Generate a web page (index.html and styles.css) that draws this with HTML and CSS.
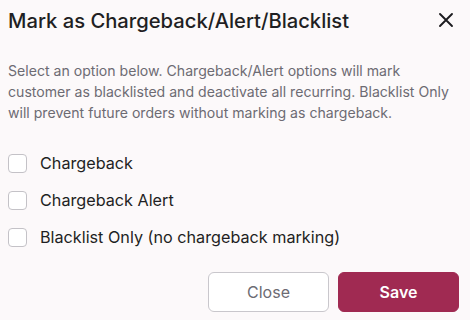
FILE: index.html
```html
<!DOCTYPE html>
<html lang="en">
<head>
    <meta charset="UTF-8">
    <title>Mark as Chargeback/Alert/Blacklist</title>
    <link rel="stylesheet" href="styles.css">
</head>
<body>
    <div class="dialog">
        <div class="dialog-header">
            <h2 class="dialog-title">Mark as Chargeback/Alert/Blacklist</h2>
            <button class="close-icon" aria-label="Close">
                <svg width="16" height="16" viewBox="0 0 16 16">
                    <path d="M2 2 L14 14 M14 2 L2 14" stroke="#1c1c1f" stroke-width="1.9" stroke-linecap="round"/>
                </svg>
            </button>
        </div>

        <p class="dialog-text">Select an option below. Chargeback/Alert options will mark customer as blacklisted and deactivate all recurring. Blacklist Only will prevent future orders without marking as chargeback.</p>

        <div class="options">
            <label class="option"><span class="box"></span>Chargeback</label>
            <label class="option"><span class="box"></span>Chargeback Alert</label>
            <label class="option"><span class="box"></span>Blacklist Only (no chargeback marking)</label>
        </div>

        <div class="dialog-footer">
            <button class="btn btn-outline">Close</button>
            <button class="btn btn-primary">Save</button>
        </div>
    </div>
</body>
</html>
```

FILE: styles.css
```css
body {
    margin: 0;
    background: #fcf9fa;
    font-family: Inter, 'Liberation Sans', sans-serif;
    color: #1f1f23;
}

.dialog {
    padding: 5px 11px 0 8px;
}

.dialog-header {
    display: flex;
    align-items: center;
    justify-content: space-between;
    height: 30px;
}

.dialog-title {
    margin: 0;
    font-size: 20.2px;
    font-weight: 500;
}

.close-icon {
    background: none;
    border: none;
    padding: 0;
    margin-right: 5px;
    width: 16px;
    height: 16px;
    display: flex;
}

.dialog-text {
    margin: 25px 0 0;
    font-size: 14.1px;
    line-height: 21px;
    color: #6d6b73;
}

.options {
    display: flex;
    flex-direction: column;
    gap: 17px;
    margin-top: 30px;
}

.option {
    display: flex;
    align-items: center;
    gap: 13px;
    font-size: 16.2px;
    height: 20px;
}

.box {
    width: 17px;
    height: 17px;
    border: 1px solid #c4c2c7;
    border-radius: 4px;
    background: #fff;
}

.dialog-footer {
    display: flex;
    justify-content: flex-end;
    gap: 9px;
    margin-top: 25px;
}

.btn {
    width: 121px;
    height: 40px;
    border-radius: 6px;
    font-family: inherit;
    font-size: 16px;
}

.btn-outline {
    background: #fff;
    border: 1px solid #c9c7cc;
    color: #6d6b73;
}

.btn-primary {
    background: #a02a52;
    border: 1px solid #a02a52;
    color: #fff;
    font-weight: 600;
}
```
